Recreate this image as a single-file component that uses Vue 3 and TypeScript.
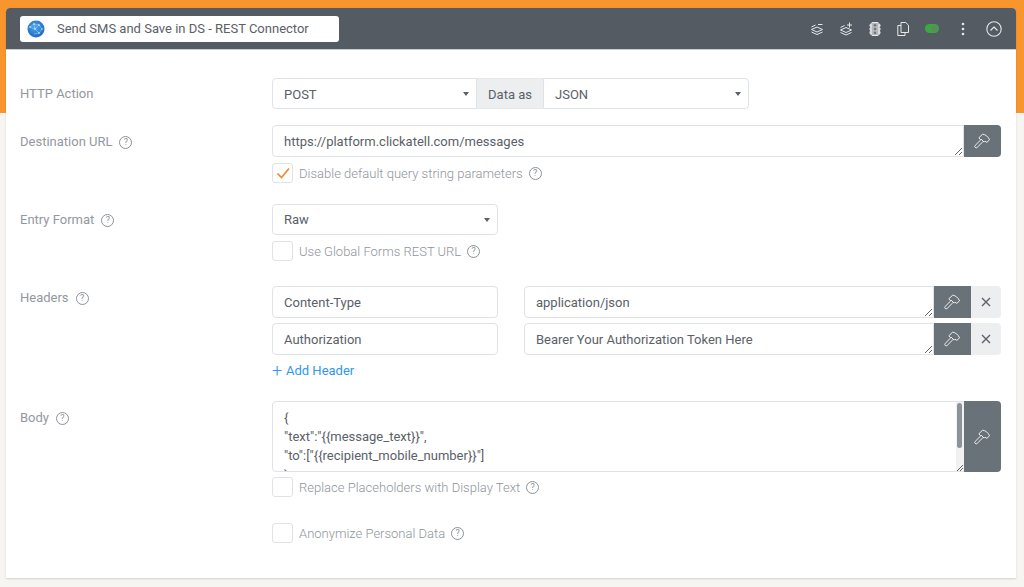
<script setup lang="ts">
const headers = [
  { name: 'Content-Type', value: 'application/json' },
  { name: 'Authorization', value: 'Bearer Your Authorization Token Here' },
]
const urlText = 'https://platform.clickatell.com/messages'
const bodyText = '{\n"text":"{{message_text}}",\n"to":["{{recipient_mobile_number}}"]\n}\n'
const hammerPath = 'M6.800 6.800L1.200 12.400a1.400 1.400 0 0 0 2 2L8.800 8.800M4.800 4.800L8.600 1.200c2.800.2 5.400 2.200 7 5.600l-2.800 2.600-1.800-1.200-.9.900-3-3-.6.600z'
</script>

<template>
  <div class="page">
    <section class="card">
      <header class="bar">
        <div class="title">
          <svg class="globe" viewBox="0 0 18 18" width="18" height="18">
            <defs>
              <radialGradient id="g" cx="45%" cy="40%" r="70%">
                <stop offset="0" stop-color="#4ea6ee" />
                <stop offset="1" stop-color="#1560bd" />
              </radialGradient>
            </defs>
            <circle cx="9" cy="9" r="8.500" fill="url(#g)" />
            <path d="M3 7l4-3 5 1 3 4-3 4-5 1M7 4l1 5 4-4M8 9l4 4M8 9l-5-2" fill="none" stroke="#a9d4f5" stroke-width=".5" />
            <g fill="#eaf5fd"><circle cx="7" cy="4" r=".8" /><circle cx="12" cy="5" r=".8" /><circle cx="8" cy="9" r=".8" /><circle cx="3" cy="7" r=".8" /><circle cx="12" cy="13" r=".8" /><circle cx="15" cy="9" r=".7" /></g>
          </svg>
          <span>Send SMS and Save in DS - REST Connector</span>
        </div>
        <div class="tools">
          <svg class="t" viewBox="0 0 16 16" width="16" height="16"><path d="M2.500 8.500l5.500-2.500 5.500 2.500-5.500 2.500zM2.500 11l5.500 2.500 5.500-2.500M2.500 6l4-2M9 3.500h4.500" /></svg>
          <svg class="t" viewBox="0 0 16 16" width="16" height="16"><path d="M2.500 9l5.500-2.500 5.500 2.500-5.500 2.500zM2.500 11.500l5.500 2.500 5.500-2.500M2.500 6.500l4-2M11.500 1.500v5M9 4h5" /></svg>
          <svg class="t light" viewBox="0 0 16 16" width="16" height="16"><path d="M5 1.500h6l.8 1v11l-.8 1H5l-.8-1v-11zM4.200 4L3 3.500v2l1.200.8M4.200 7.500L3 7v2l1.200.8M4.200 11L3 10.500v2l1.200.8M11.800 4l1.200-.5v2l-1.200.8M11.800 7.500l1.200-.5v2l-1.200.8M11.800 11l1.200-.5v2l-1.200.8" /><circle cx="8" cy="4.300" r="1.300" /><circle cx="8" cy="8" r="1.300" /><circle cx="8" cy="11.700" r="1.300" /></svg>
          <svg class="t copy" viewBox="0 0 16 16" width="16" height="16"><path d="M6 1.500h4.800l2.700 2.700v7.300H6zM6 4.500H2.800v10h7.200v-3" /></svg>
          <span class="toggle"><i></i></span>
          <svg class="dots" viewBox="0 0 4 14" width="4" height="14"><circle cx="2" cy="2" r="1.300" /><circle cx="2" cy="7" r="1.300" /><circle cx="2" cy="12" r="1.300" /></svg>
          <svg class="t up" viewBox="0 0 16 16" width="16" height="16"><circle cx="8" cy="8" r="7.200" /><path d="M4.500 9.500L8 6l3.500 3.500" /></svg>
        </div>
      </header>

      <div class="form">
        <div class="row r1">
          <label class="lab">HTTP Action</label>
          <div class="ctl group">
            <div class="select w205 joined-r">POST</div>
            <div class="addon">Data as</div>
            <div class="select w206 joined-l">JSON</div>
          </div>
        </div>

        <div class="row r2">
          <label class="lab">Destination URL <span class="q">?</span></label>
          <div class="ctl">
            <div class="inline">
              <textarea class="ta url" rows="1" readonly :value="urlText"></textarea>
              <button class="hammer end"><svg viewBox="0 0 17 16" width="17" height="16"><path :d="hammerPath" /></svg></button>
            </div>
            <div class="check">
              <span class="box"><svg viewBox="0 0 20 20" width="20" height="20"><path d="M4.500 10.500l4 4 7.500-9" /></svg></span>
              <span>Disable default query string parameters</span><span class="q">?</span>
            </div>
          </div>
        </div>

        <div class="row r3">
          <label class="lab">Entry Format <span class="q">?</span></label>
          <div class="ctl">
            <div class="select w226 solo">Raw</div>
            <div class="check">
              <span class="box"></span>
              <span>Use Global Forms REST URL</span><span class="q">?</span>
            </div>
          </div>
        </div>

        <div class="row r4">
          <label class="lab">Headers <span class="q">?</span></label>
          <div class="ctl">
            <div v-for="h in headers" :key="h.name" class="head">
              <input class="inp" readonly :value="h.name" />
              <textarea class="ta val" rows="1" readonly :value="h.value"></textarea>
              <button class="hammer"><svg viewBox="0 0 17 16" width="17" height="16"><path :d="hammerPath" /></svg></button>
              <button class="x"><svg viewBox="0 0 10 10" width="10" height="10"><path d="M1 1l8 8M9 1l-8 8" /></svg></button>
            </div>
            <a class="add"><span class="plus">+</span>Add Header</a>
          </div>
        </div>

        <div class="row r5">
          <label class="lab">Body <span class="q">?</span></label>
          <div class="ctl">
            <div class="inline">
              <div class="bigwrap">
                <textarea class="ta big" readonly :value="bodyText"></textarea>
                <div class="track">
                  <i class="thumb"></i>
                  <svg class="grip" viewBox="0 0 6 6" width="6" height="6"><path d="M0 6l6-6M3 6l3-3" /></svg>
                </div>
              </div>
              <button class="hammer end big-h"><svg viewBox="0 0 17 16" width="17" height="16"><path :d="hammerPath" /></svg></button>
            </div>
            <div class="check c5">
              <span class="box"></span>
              <span>Replace Placeholders with Display Text</span><span class="q">?</span>
            </div>
            <div class="check c6">
              <span class="box"></span>
              <span>Anonymize Personal Data</span><span class="q">?</span>
            </div>
          </div>
        </div>
      </div>
    </section>
  </div>
</template>

<style>
html, body { margin: 0; }
</style>

<style scoped>
.page {
  width: 1024px;
  height: 587px;
  box-sizing: border-box;
  padding: 8px 8px 0 6px;
  overflow: hidden;
  background: linear-gradient(#f8952c 0, #f8952c 113px, #f6f5f1 113px);
  font-family: Roboto, sans-serif;
  font-size: 13px;
  color: #5a6168;
}
.card {
  width: 1010px;
  height: 570px;
  background: #fff;
  border-radius: 4px 4px 0 0;
  box-shadow: 0 1px 2px rgba(0, 0, 0, .15);
}
.bar {
  height: 42px;
  box-sizing: border-box;
  background: #545b63;
  border-radius: 4px 4px 0 0;
  border-bottom: 1px solid #c9cdd1;
  display: flex;
  align-items: center;
  justify-content: space-between;
  padding: 0 14px;
}
.title {
  width: 319px;
  height: 26px;
  box-sizing: border-box;
  background: #fff;
  border-radius: 3px;
  display: flex;
  align-items: center;
  padding-left: 7px;
  gap: 12px;
  white-space: nowrap;
}
.globe { flex: none; }
.tools { display: flex; align-items: center; }
.tools > * { flex: none; }
.t { fill: none; stroke: #e6e8ea; stroke-width: 1; stroke-linejoin: round; margin-right: 13px; }
.t.copy { margin-right: 14px; }
.t.light { margin-right: 12px; fill: #b4b8bc; }
.t.light circle { fill: #6f757b; stroke: none; }
.toggle {
  width: 14px;
  height: 9px;
  display: flex;
  justify-content: flex-end;
  align-items: center;
  background: #3ea840;
  border-radius: 5px;
  margin-right: 22px;
}
.toggle i { width: 7px; height: 7px; border-radius: 50%; background: #55905a; margin-right: 1px; }
.dots { fill: #e6e8ea; margin-right: 21px; }
.t.up { margin-right: 0; stroke-width: 1.100; }

.form { padding: 28px 15px 0 14px; }
.row { display: flex; align-items: flex-start; }
.r2 { margin-top: 16px; }
.r3 { margin-top: 21px; }
.r4 { margin-top: 25px; }
.r5 { margin-top: 21px; }
.lab {
  width: 252px;
  flex: none;
  line-height: 34px;
  color: #93989e;
  display: flex;
  align-items: center;
  gap: 7px;
}
.r1 .lab { margin-top: 0; line-height: 33px; height: 31px; }
.r3 .lab { margin-top: -1px; }
.r4 .lab { margin-top: -5px; }
.ctl { width: 729px; }
.group { display: flex; }
.select {
  height: 31px;
  box-sizing: border-box;
  border: 1px solid #dfe3e7;
  padding-left: 11px;
  line-height: 30px;
  color: #5a6168;
  position: relative;
  background: #fff;
}
.select::after {
  content: '';
  position: absolute;
  right: 7px;
  top: 13px;
  border: 3.500px solid transparent;
  border-top: 4px solid #5c6269;
  border-bottom: 0;
}
.w205 { width: 205px; line-height: 31px; }
.w206 { width: 206px; line-height: 31px; }
.w226 { width: 226px; }
.solo { border-radius: 4px; }
.joined-r { border-radius: 4px 0 0 4px; }
.joined-l { border-radius: 0 4px 4px 0; }
.addon {
  width: 66px;
  height: 31px;
  box-sizing: border-box;
  background: #eceef0;
  border: 1px solid #e6e8eb;
  border-width: 1px 0;
  text-align: center;
  line-height: 31px;
  color: #5a6168;
}
.inline { display: flex; }
.ta {
  display: block;
  box-sizing: border-box;
  border: 1px solid #dfe3e7;
  margin: 0;
  padding: 6px 11px;
  font: 13px/19px Roboto, sans-serif;
  color: #5a6168;
  outline: none;
  background: #fff;
  resize: both;
  overflow: hidden;
}
.url { width: 692px; height: 32px; border-radius: 4px 0 0 4px; }
.val { width: 410px; height: 32px; border-radius: 4px 0 0 4px; margin-left: 26px; }
.bigwrap { position: relative; width: 692px; height: 71px; }
.big {
  width: 692px;
  height: 71px;
  border-radius: 4px 0 0 4px;
  padding: 6px 11px;
  resize: none;
  white-space: pre;
}
.track {
  position: absolute;
  right: 0;
  top: 1px;
  bottom: 1px;
  width: 8px;
  background: #f1f1f1;
}
.thumb {
  position: absolute;
  left: 1px;
  top: 1px;
  width: 5px;
  height: 45px;
  background: #8b939b;
  border-radius: 3px;
}
.grip {
  position: absolute;
  right: 1px;
  bottom: 0;
  stroke: #5c6269;
  stroke-width: 1;
  fill: none;
}
button {
  padding: 0;
  margin: 0;
  border: 0;
  display: flex;
  align-items: center;
  justify-content: center;
  flex: none;
}
.hammer {
  width: 37px;
  height: 32px;
  background: #697279;
}
.hammer svg { fill: none; stroke: #eef0f1; stroke-width: 1; stroke-linejoin: round; }
.hammer.end { border-radius: 0 4px 4px 0; }
.big-h { height: 71px; }
.x {
  width: 30px;
  height: 32px;
  background: #eceef0;
  border-radius: 0 4px 4px 0;
}
.x svg { stroke: #5c6269; stroke-width: 1.400; fill: none; }
.head { display: flex; margin-bottom: 5px; }
.inp {
  width: 226px;
  height: 32px;
  box-sizing: border-box;
  border: 1px solid #dfe3e7;
  border-radius: 4px;
  padding: 0 11px;
  margin: 0;
  font: 13px Roboto, sans-serif;
  color: #5a6168;
  outline: none;
}
.add {
  display: flex;
  align-items: center;
  margin-top: 6px;
  line-height: 20px;
  color: #2f96f3;
}
.r5 { margin-top: 20px; }
.plus { width: 14px; font-size: 18px; font-weight: 300; line-height: 20px; }
.check {
  display: flex;
  align-items: center;
  height: 20px;
  margin-top: 6px;
  color: #8f959b;
  font-weight: 300;
}
.c5 { margin-top: 5px; }
.c6 { margin-top: 26px; }
.box {
  width: 21px;
  height: 20px;
  box-sizing: border-box;
  border: 1px solid #dfe3e7;
  border-radius: 3px;
  margin-right: 6px;
  flex: none;
  display: flex;
  align-items: center;
  justify-content: center;
}
.box svg { fill: none; stroke: #f08a2c; stroke-width: 1.700; flex: none; }
.q {
  width: 13px;
  height: 13px;
  box-sizing: border-box;
  border: 1px solid #8c9298;
  border-radius: 50%;
  font-size: 9px;
  line-height: 11px;
  text-align: center;
  color: #8c9298;
  flex: none;
  font-weight: 400;
}
.check .q { margin-left: 6px; }
</style>
